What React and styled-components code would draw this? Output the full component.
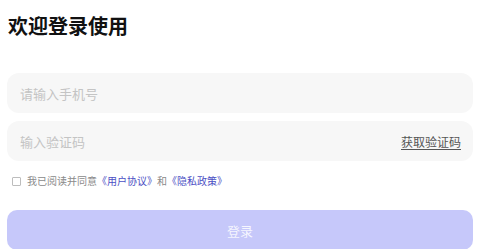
import { useState } from "react";
import styled, { createGlobalStyle } from "styled-components";

const GlobalStyle = createGlobalStyle`
  * { box-sizing: border-box; }
  body {
    margin: 0;
    background: #ffffff;
    font-family: "Noto Sans CJK SC", "Noto Sans", sans-serif;
  }
`;

const Page = styled.div`
  display: flex;
  flex-direction: column;
  padding: 16px 7px 0 7px;
  width: 480px;
`;

const Title = styled.h1`
  margin: 0 0 37px 1px;
  font-size: 20px;
  line-height: 20px;
  font-weight: 700;
  color: #111111;
`;

const Fields = styled.div`
  display: flex;
  flex-direction: column;
  gap: 8px;
`;

const Field = styled.div`
  display: flex;
  align-items: center;
  height: 40px;
  padding: 0 12px 0 13px;
  border-radius: 12px;
  background: #f7f7f7;
`;

const Input = styled.input`
  flex: 1;
  min-width: 0;
  border: none;
  outline: none;
  background: transparent;
  font-family: inherit;
  font-size: 13px;
  color: #333333;
  caret-color: #5a5ad8;
  padding: 0;
  &::placeholder {
    color: #c4c4c4;
  }
`;

const CodeLink = styled.span`
  font-size: 12px;
  color: #555555;
  text-decoration: underline;
  text-underline-offset: 2px;
  white-space: nowrap;
`;

const Agreement = styled.label`
  display: flex;
  align-items: center;
  gap: 6px;
  margin: 14px 0 0 5px;
  height: 12px;
  font-size: 10px;
  line-height: 12px;
  color: #8a8a8a;
`;

const Box = styled.span`
  width: 9px;
  height: 9px;
  border: 1px solid ${(p) => (p.checked ? "#5a5ad8" : "#bdbdbd")};
  background: ${(p) => (p.checked ? "#5a5ad8" : "#ffffff")};
  border-radius: 1px;
`;

const Link = styled.span`
  color: #4b4fc4;
`;

const Submit = styled.button`
  margin-top: 23px;
  height: 40px;
  border: none;
  border-radius: 10px;
  background: ${(p) => (p.disabled ? "#c6c8fa" : "#6166f1")};
  color: rgba(255, 255, 255, 0.85);
  font-family: inherit;
  font-size: 13px;
  cursor: pointer;
`;

export default function App() {
  const [phone, setPhone] = useState("");
  const [code, setCode] = useState("");
  const [agreed, setAgreed] = useState(false);

  return (
    <Page>
      <GlobalStyle />
      <Title>欢迎登录使用</Title>
      <Fields>
        <Field>
          <Input
            autoFocus
            placeholder="请输入手机号"
            value={phone}
            onChange={(e) => setPhone(e.target.value)}
          />
        </Field>
        <Field>
          <Input
            placeholder="输入验证码"
            value={code}
            onChange={(e) => setCode(e.target.value)}
          />
          <CodeLink>获取验证码</CodeLink>
        </Field>
      </Fields>
      <Agreement onClick={() => setAgreed(!agreed)}>
        <Box checked={agreed} />
        <span>
          我已阅读并同意<Link>《用户协议》</Link>和<Link>《隐私政策》</Link>
        </span>
      </Agreement>
      <Submit disabled={!(phone && code && agreed)}>登录</Submit>
    </Page>
  );
}
